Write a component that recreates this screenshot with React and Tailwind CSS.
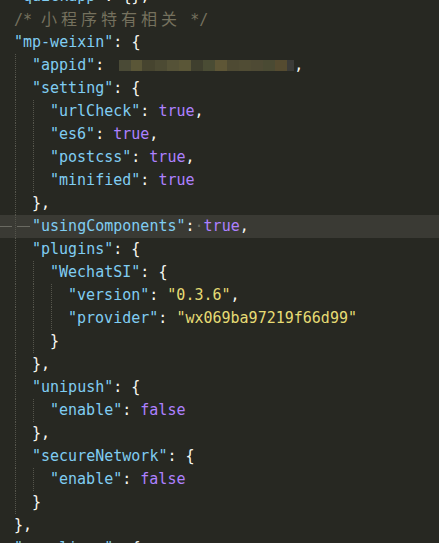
import React from 'react';

const K = ({ children }) => <span className="text-[#80cdf2]">{children}</span>;
const P = ({ children }) => <span className="text-[#f8f8f2]">{children}</span>;
const S = ({ children }) => <span className="text-[#e6db74]">{children}</span>;
const B = ({ children }) => <span className="text-[#ae81ff]">{children}</span>;

const indentClass = {
  1: 'pl-[14px]',
  2: 'pl-[32px]',
  3: 'pl-[50px]',
  4: 'pl-[68px]'
};

const guideClass = {
  15: 'left-[15px]',
  33: 'left-[33px]',
  51: 'left-[51px]'
};

// blurred appid value
const mosaic = [
  ['w-[12px]', 'bg-[#4a4a36]'],
  ['w-[11px]', 'bg-[#5a5637]'],
  ['w-[13px]', 'bg-[#46442f]'],
  ['w-[12px]', 'bg-[#4c4a33]'],
  ['w-[12px]', 'bg-[#555237]'],
  ['w-[12px]', 'bg-[#5a5637]'],
  ['w-[12px]', 'bg-[#3f3f2e]'],
  ['w-[12px]', 'bg-[#4a4c34]'],
  ['w-[12px]', 'bg-[#5e5636]'],
  ['w-[12px]', 'bg-[#4e4a33]'],
  ['w-[12px]', 'bg-[#504c34]'],
  ['w-[12px]', 'bg-[#4e4a34]'],
  ['w-[12px]', 'bg-[#4a4a33]'],
  ['w-[12px]', 'bg-[#554b30]'],
  ['w-[7px]', 'bg-[#3b3b38]']
];

const Line = ({ indent = 1, guides = [], active = false, children }) => (
  <div className={`relative h-[23px] flex items-center whitespace-pre ${indentClass[indent]} ${active ? 'bg-[#3a3a34]' : ''}`}>
    {guides.map((g) => (
      <span key={g} className={`absolute top-0 bottom-0 ${guideClass[g]} border-l border-dotted border-[#55554c]`} />
    ))}
    {active && (
      <>
        <span className="absolute left-0 top-[11px] w-[12px] h-px bg-[#6a6a62]" />
        <span className="absolute left-[17px] top-[11px] w-[13px] h-px bg-[#6a6a62]" />
      </>
    )}
    <span className="relative">{children}</span>
  </div>
);

const App = () => {
  const g1 = [15];
  return (
    <div className="w-[439px] h-[543px] overflow-hidden bg-[#272822] font-['DejaVu_Sans_Mono','Liberation_Mono',monospace] text-[15px] text-[#f8f8f2]">
      <div className="-mt-[15.5px]">
        <Line><K>"quickapp"</K><P>: {'{}'},</P></Line>
        <Line>
          <span className="text-[#75715e]">/* <span className="font-['Noto_Sans_CJK_SC',sans-serif] text-[16px] tracking-[4px]">小程序特有相关</span> */</span>
        </Line>
        <Line><K>"mp-weixin"</K><P>: {'{'}</P></Line>
        <Line indent={2} guides={g1}>
          <K>"appid"</K><P>: </P>
          <span className="inline-flex h-[11px] ml-[6px] align-middle">
            {mosaic.map(([w, c], i) => (
              <span key={i} className={`${w} h-full ${c}`} />
            ))}
          </span>
          <P>,</P>
        </Line>
        <Line indent={2} guides={g1}><K>"setting"</K><P>: {'{'}</P></Line>
        <Line indent={3} guides={[15, 33]}><K>"urlCheck"</K><P>: </P><B>true</B><P>,</P></Line>
        <Line indent={3} guides={[15, 33]}><K>"es6"</K><P>: </P><B>true</B><P>,</P></Line>
        <Line indent={3} guides={[15, 33]}><K>"postcss"</K><P>: </P><B>true</B><P>,</P></Line>
        <Line indent={3} guides={[15, 33]}><K>"minified"</K><P>: </P><B>true</B></Line>
        <Line indent={2} guides={g1}><P>{'}'},</P></Line>
        <Line indent={2} guides={g1} active>
          <K>"usingComponents"</K><P>:</P><span className="text-[#6a6a62]">·</span><B>true</B><P>,</P>
        </Line>
        <Line indent={2} guides={g1}><K>"plugins"</K><P>: {'{'}</P></Line>
        <Line indent={3} guides={[15, 33]}><K>"WechatSI"</K><P>: {'{'}</P></Line>
        <Line indent={4} guides={[15, 33, 51]}><K>"version"</K><P>: </P><S>"0.3.6"</S><P>,</P></Line>
        <Line indent={4} guides={[15, 33, 51]}><K>"provider"</K><P>: </P><S>"wx069ba97219f66d99"</S></Line>
        <Line indent={3} guides={[15, 33]}><P>{'}'}</P></Line>
        <Line indent={2} guides={g1}><P>{'}'},</P></Line>
        <Line indent={2} guides={g1}><K>"unipush"</K><P>: {'{'}</P></Line>
        <Line indent={3} guides={[15, 33]}><K>"enable"</K><P>: </P><B>false</B></Line>
        <Line indent={2} guides={g1}><P>{'}'},</P></Line>
        <Line indent={2} guides={g1}><K>"secureNetwork"</K><P>: {'{'}</P></Line>
        <Line indent={3} guides={[15, 33]}><K>"enable"</K><P>: </P><B>false</B></Line>
        <Line indent={2} guides={g1}><P>{'}'}</P></Line>
        <Line><P>{'}'},</P></Line>
        <Line><K>"mp-alipay"</K><P>: {'{'}</P></Line>
      </div>
    </div>
  );
};

export default App;
